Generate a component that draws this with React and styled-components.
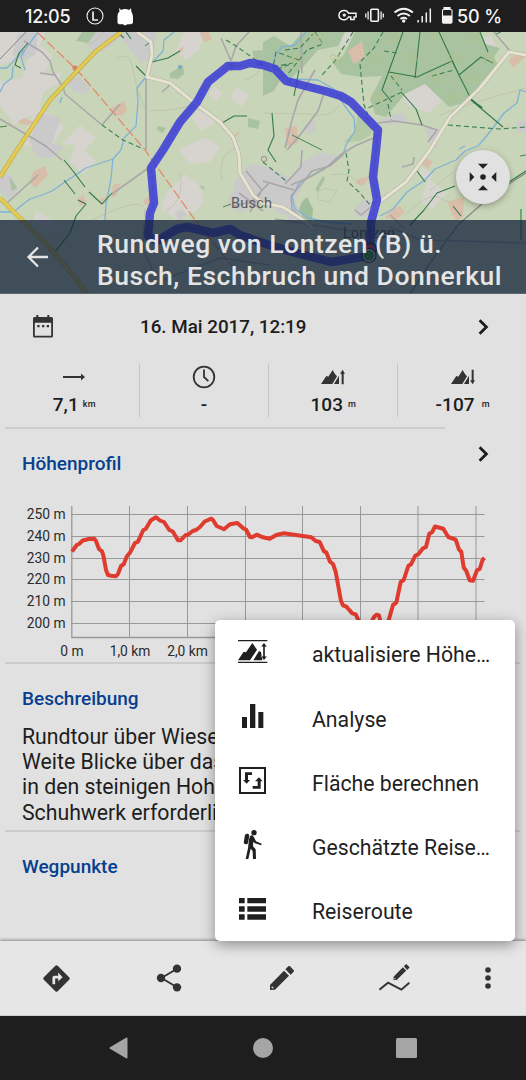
import React from 'react';
import styled, { createGlobalStyle } from 'styled-components';

const GlobalStyle = createGlobalStyle`
    * {
        box-sizing: border-box;
    }
    body {
        margin: 0;
        background: #e1e1e1;
        font-family: Roboto, "Liberation Sans", sans-serif;
        color: #1d1d1d;
    }
    svg {
        display: block;
        flex: none;
    }
`;

const Screen = styled.div`
    position: relative;
    display: flex;
    flex-direction: column;
    width: 526px;
    height: 1080px;
    overflow: hidden;
    background: #e1e1e1;
`;

const StatusBar = styled.div`
    display: flex;
    align-items: center;
    height: 32px;
    padding: 0 25px;
    background: #1e1e1e;
    color: #f5f5f5;
`;
const StatusText = styled.span`
    font-family: Inter, Roboto, sans-serif;
    font-size: 18px;
    font-weight: 500;
    line-height: 32px;
    white-space: nowrap;
    width: ${props => props.$width}px;
    letter-spacing: ${props => props.$spacing}px;
    padding-top: 2px;
`;
const StatusIcons = styled.div`
    display: flex;
    align-items: center;
    margin-left: ${props => props.$left};
`;

const MapArea = styled.div`
    position: relative;
    height: 262px;
    flex: none;
`;
const TitleBar = styled.div`
    position: absolute;
    left: 0;
    right: 0;
    bottom: 0;
    height: 74.5px;
    display: flex;
    align-items: center;
    padding: 1px 0 0 26px;
    background: rgba(17, 32, 57, 0.75);
    border-bottom: 1px solid #5d666e;
`;
const Title = styled.h1`
    margin: 0 0 0 48px;
    padding-top: 7px;
    font-size: 26.5px;
    font-weight: 500;
    line-height: 32px;
    letter-spacing: 0.53px;
    white-space: pre;
    color: #e4e4e4;
`;
const RoundButton = styled.div`
    position: absolute;
    left: 456px;
    top: 118px;
    width: 54px;
    height: 54px;
    border-radius: 50%;
    background: #e1e1e1;
    box-shadow: 0 2px 6px rgba(0, 0, 0, 0.3);
    display: flex;
    align-items: center;
    justify-content: center;
`;

const Content = styled.div`
    flex: 1;
    min-height: 0;
    display: flex;
    flex-direction: column;
`;
const DateRow = styled.div`
    display: flex;
    align-items: center;
    height: 64px;
    padding: 1px 36px 0 33px;
`;
const DateText = styled.div`
    flex: 1;
    margin-left: 87px;
    font-size: 18.8px;
    font-weight: 500;
`;
const Stats = styled.div`
    display: flex;
    height: 69px;
    padding: 6px 0 10px 9.5px;
`;
const Stat = styled.div`
    width: 129.3px;
    flex: none;
    display: flex;
    flex-direction: column;
    align-items: center;
    border-left: ${props => props.$first ? 'none' : '1.5px solid #c4c4c4'};
`;
const StatIcon = styled.div`
    flex: none;
    height: 26px;
    display: flex;
    align-items: center;
`;
const StatValue = styled.div`
    display: flex;
    align-items: center;
    line-height: 29px;
    font-size: 19px;
    font-weight: 500;
    letter-spacing: 0.1px;
`;
const Unit = styled.span`
    font-size: 9px;
    margin-left: ${props => props.$gap}px;
`;
const Divider = styled.div`
    flex: none;
    height: 2px;
    margin: 0 ${props => props.$right}px 0 5px;
    background: #cccccc;
`;
const SectionHeader = styled.div`
    display: flex;
    justify-content: space-between;
    height: ${props => props.$height}px;
    padding: 23px 36px 0 22px;
`;
const SectionTitle = styled.h2`
    margin: 0;
    font-size: 19px;
    font-weight: 500;
    line-height: 24px;
    color: #063f8f;
`;
const Description = styled.p`
    margin: 0;
    height: 106px;
    padding-left: 22px;
    font-size: 21.25px;
    line-height: 25.2px;
    white-space: pre;
`;
const ChevronSlot = styled.div`
    margin-top: -7px;
`;

const Toolbar = styled.div`
    flex: none;
    display: flex;
    align-items: center;
    height: 75px;
    background: #e6e6e6;
    border-bottom: 1px solid #c9cdcc;
    box-shadow: 0 -1px 3px rgba(0, 0, 0, 0.4);
`;
const ToolButton = styled.div`
    display: flex;
    justify-content: center;
    width: ${props => props.$narrow ? '75.2px' : '112.7px'};
`;
const NavBar = styled.div`
    flex: none;
    display: flex;
    align-items: center;
    justify-content: space-between;
    height: 64px;
    padding: 0 109px;
    background: #1e1e1e;
`;

const Menu = styled.div`
    position: absolute;
    left: 215px;
    top: 620px;
    width: 300px;
    height: 321px;
    border-radius: 5px;
    background: #ffffff;
    box-shadow: 0 4px 14px rgba(0, 0, 0, 0.38);
    padding-top: 2px;
`;
const MenuItem = styled.div`
    display: flex;
    align-items: center;
    height: 64.2px;
    padding-left: 22px;
`;
const MenuIcon = styled.div`
    width: 75px;
    padding-bottom: 4px;
`;
const MenuLabel = styled.div`
    font-size: 21.25px;
    line-height: 30px;
    padding-top: 2.6px;
    white-space: nowrap;
    color: #1f1f1f;
`;

const ROUTE = 'M369 256L331 262L296 253L263 243L240 235L230 229L213 233L187 227L177 229L157 241L148 236L150 213L154 203L151 168L163 150L180 122L197 102L208 82L228 66L240 66L250 63L263 65L275 69L286 81L325 91L341 96L351 102L378 130L376 150L373 177L377 200L371 222L370 250';

const TREES = [[318, 38], [393, 38], [435, 38], [474, 38], [336, 59], [374, 59], [412, 59], [454, 59], [489, 59], [395, 79], [435, 79], [474, 79], [378, 98], [454, 98], [295, 59]];

const MapView = () => (
    <svg width="526" height="262" viewBox="0 32 526 262">
        <rect y="32" width="526" height="262" fill="#c9d5b8"/>
        {/* fields */}
        <g fill="#d7d4d0">
            <path d="M0 32H46L40 45L53 56L43 75L62 72L58 84L43 92L39 110L14 125L0 104V82L22 78L30 56L0 65Z"/>
            <path d="M36 106L51 115L64 127L53 144L37 148L24 145L27 126Z"/>
            <path d="M80 125L96 138L84 150L96 161L83 174L70 162L75 144L62 145Z"/>
            <path d="M184 32H204L199 50L186 60L176 51Z"/>
            <path d="M214 86L223 93L216 101L208 95ZM237 87L249 96L241 107L230 97ZM198 110L217 121L201 131L192 118Z"/>
            <path d="M206 138L220 147L210 162L190 164L178 149Z"/>
            <path d="M185 174L200 186L204 200L198 209L178 220L161 209L165 195Z"/>
            <path d="M401 94L430 80L442 101L429 113L407 105Z"/>
            <path d="M469 48L490 35L497 46L481 56ZM428 178L447 193L432 209L421 202ZM343 34L352 32L349 44L340 48Z"/>
            <path d="M36 211L53 221L49 230L34 219ZM422 167L433 174L429 180L419 175Z"/>
        </g>
        <g fill="#cacaca">
            <path d="M95 32H157L153 58L140 63L129 48L121 37L103 52L87 48Z"/>
            <path d="M18 34L38 32L36 54L24 61L12 55Z"/>
            <path d="M67 83L78 76L91 88L84 94L72 91ZM43 113L61 118L52 143L64 147L53 158L36 157L29 140Z"/>
            <path d="M235 181L250 164L269 167L291 179L294 216L278 214L265 199L240 213L227 206Z"/>
            <path d="M300 164L321 152L337 157L330 166L312 170L294 201L309 224H288L286 185Z"/>
            <path d="M354 210L364 198L372 202L370 218L358 217ZM380 120L402 112L408 121L388 125ZM174 213L182 209L187 215L179 220Z"/>
            <path d="M0 176L12 174L18 190L9 199L0 192ZM304 127L314 120L317 129L307 135ZM425 128L440 129L437 150L430 142ZM517 121H526V133L517 132Z"/>
        </g>
        {/* woods */}
        <g fill="#a9c3a1">
            <path d="M303 32H345L338 46L318 50L304 66L289 80L275 70L263 59V42L274 36L290 46Z"/>
            <path d="M355 32H480L485 44L500 48L494 57L498 66L480 84L471 101L449 107L441 99L425 84L405 94L386 117L375 114L370 99L382 76L361 77L341 74L333 63L343 56Z"/>
            <path d="M263 65L282 77L274 91L263 96ZM252 51L264 50L270 65L257 66ZM223 62L237 63L231 72Z"/>
            <path d="M302 202L307 197L313 209L312 222L303 218L299 209Z" fill="#9fbd99"/>
            <path d="M170 73L183 65L184 74L178 79L170 78Z"/>
            <path d="M76 41L82 32L96 32L88 43ZM158 126L166 128L163 133L157 130ZM248 118L260 121L258 129L248 127Z"/>
            <path d="M9 176L17 188L12 191ZM199 185L205 187L203 190Z"/>
            <path d="M315 189L323 176L325 179L318 192Z"/>
            <path d="M358 112L370 120L372 134L360 141L344 142L354 132Z" fill="#b4caa7"/>
        </g>
        <g fill="#d8bea8">
            <path d="M199 32H209L212 40L204 42ZM348 51L362 41L365 58L354 64ZM508 60L515 55L525 57L513 68Z"/>
            <path d="M112 108L124 101L127 110L122 116L113 114ZM18 121L24 118L34 122L28 125L20 124Z"/>
            <path d="M33 172L45 166L48 175L35 188L30 182ZM113 185L121 183L116 196L111 198ZM99 199L109 196L103 205ZM77 199L83 195L86 202L80 206Z"/>
            <path d="M143 201L151 194L151 205L145 205ZM285 128L297 126L298 143L287 146ZM424 156L433 162L428 169L420 163Z"/>
            <path d="M357 179L369 177L363 186L356 183ZM390 210L400 206L405 212L396 220L385 218ZM448 202L464 197L463 217L456 221L450 210Z"/>
            <path d="M232 137L240 130L238 135L232 139ZM177 51L184 46L182 52Z"/>
        </g>
        {/* contours */}
        <g fill="none" stroke="#b8bea8" strokeWidth="0.7">
            <path d="M82 40Q91 48 98 38T110 42M116 59Q130 50 133 70T145 109M180 172Q185 200 166 211M150 110Q170 113 198 103M222 180Q217 155 237 147"/>
            <path d="M263 113L310 114Q330 119 340 105M330 175Q350 170 360 185M440 115Q480 100 526 88M318 192Q324 186 337 191L330 202L318 200Z"/>
            <path d="M405 215Q430 190 442 199T470 185M35 245Q70 230 110 212T144 218M245 80Q265 74 262 52M478 150Q460 168 430 190"/>
        </g>
        <g fill="none" stroke="#7fb3d6" strokeWidth="1.3" strokeLinejoin="round">
            <path d="M38 32L26 48L21 57L25 70M24 50L7 68L0 68M13 66L12 78L4 84L0 92"/>
            <path d="M174 32L164 40L163 51L154 61M145 78L137 88L138 102L136 126L124 138L121 150L113 159L86 168L62 184L52 191L42 195L30 199L22 205L14 212L0 212M113 158L111 179L106 204L105 220"/>
            <path d="M306 32L295 45L282 47L276 54L273 68L292 79L318 80L334 89L344 105L354 118L355 131L346 145L343 155L328 166L299 183L292 197L295 209L309 218L326 222L352 224"/>
            <path d="M526 92L520 90L517 103L504 113L493 128L484 139L478 146L465 151L456 160L435 169L425 180L407 192L393 209L380 216"/>
            <path d="M60 103L62 97M465 146L459 149"/>
        </g>
        {/* minor roads */}
        <g fill="none" stroke="#aaa6aa" strokeWidth="1.6" strokeLinejoin="round">
            <path d="M24 41L42 52L50 61L53 72L63 87L65 94L102 125M40 73L54 75M102 125L120 104M0 119L34 139L47 147L62 160"/>
            <path d="M146 78L146 150M170 85L162 92M7 203L38 175M147 169L112 194M249 32L236 46L231 61M221 38L231 61"/>
            <path d="M324 93L318 111L300 135L287 150M315 70L298 100L292 120L285 148M378 123L394 121L422 125L437 130L428 142M378 136L355 146L340 155L326 168L310 177L291 185"/>
            <path d="M301 32L302 73M494 32L510 51M294 190L263 181M302 150L301 167L285 184M343 155L330 166L312 171L304 181L291 196L292 209L306 222L315 231"/>
            <path d="M246 171L262 190L250 212M234 206L251 202L269 183M239 193L263 211M355 210L361 215L371 207M402 167L413 164L414 157M390 215L404 228"/>
            <path d="M526 173L501 189L484 202L458 225L430 263L410 294" stroke="#888888" strokeWidth="1.2"/>
            <path d="M26 32L0 59" stroke="#858585" strokeWidth="1"/>
            <path d="M144 225L143 250L155 275M275 219L352 231M160 281L220 258L270 265M390 227L420 240L526 243"/>
        </g>
        {/* footpaths */}
        <g fill="none" stroke="#3a8050" strokeWidth="1.1" strokeDasharray="5 3">
            <path d="M102 125L123 140L141 148M299 60L276 52L273 67L293 63L278 69M285 50L300 48L313 34M315 32L323 44L307 50L287 75M353 32L335 61L320 77M360 64L364 105L368 115M383 32L374 48L361 61M384 51L397 53M432 76L454 70"/>
            <path d="M391 76L402 90M402 92L368 108M388 104L391 120M226 40L236 46L263 65M448 125L499 129L526 127M346 153L349 170L347 181L359 192L371 206M263 162L286 181M472 100L484 109"/>
        </g>
        <g fill="none" stroke="#347a49" strokeWidth="1.1" strokeLinejoin="round">
            <path d="M403 32L382 90L392 102M420 32L415 78M389 72L417 77L452 61L471 99L482 108M439 32L459 75L481 57L493 63M471 100L503 127M299 70L294 96M272 113L274 136L268 150L276 162"/>
            <path d="M28 43L19 53L15 65L21 68M152 62L168 58L180 51M136 66L146 76M222 123L234 116L247 116M64 160L73 171L85 187M64 180L75 194M89 192L102 204L112 193M78 200L86 204L76 216L70 233L54 253"/>
            <path d="M402 93L416 109L422 125M117 32L124 38M126 32L131 39M417 171L425 182M455 186L437 193L424 210L410 225M526 171L509 182L493 186M521 209L521 240M480 32L488 52M453 206L461 216"/>
            <path d="M292 135L308 143L322 150M0 127L7 126M145 46L149 43M223 207L231 204M520 156L526 155M496 34L501 32" strokeWidth="0.9"/>
        </g>
        <path d="M38 33L78 71L145 150L195 220L235 270" fill="none" stroke="#e38666" strokeWidth="1.2" strokeDasharray="10 3"/>
        <circle cx="75" cy="68" r="2.5" fill="#e27b64"/>
        <circle cx="180" cy="67" r="2" fill="#70a9ce"/>
        <g fill="none" strokeLinejoin="round">
            <path d="M121 32L95 52L78 70L50 100L17 150L0 177M0 198L27 225L50 248L73 275L87 294" stroke="#b8aa52" strokeWidth="4.5"/>
            <path d="M121 32L95 52L78 70L50 100L17 150L0 177M0 198L27 225L50 248L73 275L87 294" stroke="#e3cb52" strokeWidth="3.2"/>
            <path d="M137 32L151 42L152 55L147 77L170 83L197 105L220 122L233 137L239 154L240 173L253 195L263 203L283 207L306 222L315 230M526 55L509 52L480 88L450 117L430 150L406 182L378 203L370 211" stroke="#b5b5a4" strokeWidth="4.3"/>
            <path d="M137 32L151 42L152 55L147 77L170 83L197 105L220 122L233 137L239 154L240 173L253 195L263 203L283 207L306 222L315 230M526 55L509 52L480 88L450 117L430 150L406 182L378 203L370 211" stroke="#e7e3d2" strokeWidth="3"/>
        </g>
        <circle cx="264" cy="159" r="2.6" fill="#c9d5b8" stroke="#909090"/>
        {TREES.map(([x, y]) => (
            <g key={x + '-' + y} fill="none" stroke="#b4bf82" strokeWidth="0.9" opacity="0.75">
                <circle cx={x - 3} cy={y - 2} r="2.5"/>
                <path d={`M${x - 3} ${y}V${y + 5}M${x + 3} ${y - 5}L${x} ${y + 2}H${x + 6}ZM${x + 3} ${y + 2}V${y + 5}`}/>
            </g>
        ))}
        <g fontFamily="Roboto, sans-serif" fontSize="14.5" fill="#5b5b5b">
            <text x="231" y="208" textLength="41">Busch</text>
            <text x="343" y="238" textLength="52">Lontzen</text>
        </g>
        <path d={ROUTE} fill="none" stroke="#3a39d8" strokeOpacity="0.85" strokeWidth="8.5" strokeLinejoin="round"/>
        <path d={ROUTE} fill="none" stroke="#3f45a8" strokeOpacity="0.5" strokeWidth="1" strokeDasharray="6 3"/>
        <circle cx="370.5" cy="249" r="6" fill="#c73c58" stroke="#222" strokeWidth="1.5"/>
        <circle cx="369" cy="255.5" r="6" fill="#3c9b3c" stroke="#ffffff" strokeWidth="1.3"/>
        <circle cx="369" cy="255.5" r="7" fill="none" stroke="#222" strokeWidth="1.2"/>
    </svg>
);

const Chevron = () => (
    <svg width="12" height="18" viewBox="0 0 12 18">
        <path d="M1.6 2.2L8.4 9L1.6 15.8" fill="none" stroke="#1c1c1c" strokeWidth="2.8"/>
    </svg>
);

// mountain silhouette shared by the elevation icons, with a cut for the second slope
const Mountains = () => (
    <path d="M0 45L16 21L22 23L35 3L42 15L48 22L34 45ZM39 45L54 20V45Z"/>
);

const PROFILE = [
    [72, 551.7], [76.7, 545], [79, 544], [82.7, 540.5], [89, 539], [94.3, 538.7], [96, 541], [99, 549], [102, 551.3], [103.5, 556], [106, 570], [108, 575], [111, 575.7], [116, 576.3], [118, 574], [121, 566], [123.7, 564.3], [127, 556], [130, 552.7], [135, 543], [138, 541.7], [143.3, 530], [145.7, 529], [150.7, 520.5], [156, 517.3], [160, 520.5], [164, 522], [169.3, 530], [172.7, 531.5], [178, 540.3], [180.5, 540.3], [185.3, 535.3], [188, 534.7], [192.7, 531], [196, 530], [200, 527], [204.7, 521.5], [211.3, 518.7], [213, 520], [216.7, 526], [224, 529.3], [230, 524.3], [237.3, 523], [243.3, 528.3], [246, 529.5], [250, 537], [252, 537.3], [256.7, 534.7], [263, 537.3], [269.7, 538.7], [276.3, 535], [283.7, 533.3], [311.3, 537.3], [315.7, 541], [319.7, 542], [324, 551.3], [326.3, 552.3], [330, 561.7], [333, 564], [335.7, 572], [341, 601], [343, 605.3], [346.3, 606.7], [352.3, 613.3], [355.7, 614.3], [358.3, 620], [364, 628], [369, 627], [374, 617], [376.5, 614.7], [379, 615.5], [381, 624], [386, 628], [389, 619], [393, 605], [396.3, 602.7], [400.7, 582], [403.7, 580], [408.3, 566], [411, 564.3], [415.3, 555.7], [418.5, 554], [423, 548.3], [426, 547], [429.3, 533.8], [432, 532.3], [435, 526.5], [443.3, 528.7], [448.3, 537], [455.7, 539.7], [459, 549.5], [461.3, 551.7], [463.7, 567.5], [466.3, 571], [469.7, 580.3], [473, 580.7], [477, 570.3], [479.7, 569], [482.5, 560], [484.5, 557.8],
];
const GRID_X = [129.5, 187.5, 245.5, 302.5, 360.5, 418, 476];
const LEVELS = [['250 m', 514.5], ['240 m', 536.5], ['230 m', 558.5], ['220 m', 579.5], ['210 m', 601.5], ['200 m', 623.5]];

const ElevationChart = () => (
    <svg width="526" height="165" viewBox="0 497 526 165" fontFamily="Roboto, sans-serif" fontSize="13.8" fill="#2b2b2b">
        <g stroke="#999999" strokeWidth="1">
            {LEVELS.map(([label, y]) => <line key={label} x1="71" x2="484.5" y1={y} y2={y}/>)}
            {GRID_X.map(x => <line key={x} x1={x} x2={x} y1="506" y2="637"/>)}
            <path d="M71.8 506V637.5H484.5" fill="none" strokeWidth="1.3"/>
        </g>
        {LEVELS.map(([label, y]) => <text key={label} x="65.5" y={y + 4.5} textAnchor="end">{label}</text>)}
        <text x="72" y="655.5" textAnchor="middle">0 m</text>
        <text x="130" y="655.5" textAnchor="middle">1,0 km</text>
        <text x="187.5" y="655.5" textAnchor="middle">2,0 km</text>
        <polyline points={PROFILE.map(p => p.join(',')).join(' ')} fill="none" stroke="#df3b2f" strokeWidth="4" strokeLinejoin="round"/>
    </svg>
);

const Pencil = ({ size }) => (
    <svg width={size} height={size} viewBox="0 0 72 72" fill="#333333">
        <path fillRule="evenodd" d="M0 57L42 14L57 29L15 71L0 72ZM5 61V67H11L9 63Z"/>
        <path d="M46 10L55 1Q57 -1 60 1L70 11Q73 14 71 17L62 26Z"/>
    </svg>
);

const App = () => {
    return (
        <Screen>
            <GlobalStyle/>
            <StatusBar>
                <StatusText $width={61} $spacing={-0.3}>12:05</StatusText>
                <svg width="18" height="18" viewBox="0 0 18 18" fill="none" stroke="#f0f0f0">
                    <circle cx="9" cy="9" r="8" strokeWidth="1.1"/>
                    <path d="M7 4.5V13H12" strokeWidth="1.7"/>
                </svg>
                <StatusIcons $left="13px">
                    <svg width="17" height="19" viewBox="0 0 17 19" fill="#ffffff">
                        <path d="M2 1L4 3Q8 1 12 3L14 1.2L14.5 5Q16 7 16 10V16L14 17.3H10.5L8 18.5L6 17.3H2L0.5 16V9Q0.5 6 2.5 4.6Z"/>
                    </svg>
                </StatusIcons>
                <StatusIcons $left="auto">
                    <svg width="120" height="22" viewBox="-1.5 0 120 22" fill="none" stroke="#f2f2f2">
                        {/* vpn key */}
                        <path d="M10 8.3H17.5V12H15.6V14.6H12.2V12H10A5 4.7 0 1 1 10 8.3Z" strokeWidth="1.5"/>
                        <circle cx="5.8" cy="10.1" r="1.6" fill="#f2f2f2" stroke="none"/>
                        {/* vibration */}
                        <rect x="32.3" y="4.3" width="7.6" height="12" rx="1" strokeWidth="1.6"/>
                        <path d="M29.6 6.5V14.5M27.3 8.5V12.5M42.6 6.5V14.5M44.8 8.5V12.5" strokeWidth="1.3"/>
                        {/* wifi */}
                        <path d="M56 7.5Q65.2 0 74.4 7.5M59 11Q65.2 6 71.4 11M62 14Q65.2 11.5 68.4 14" strokeWidth="1.8"/>
                        <circle cx="65.2" cy="16" r="1.7" fill="#f2f2f2" stroke="none"/>
                        {/* signal */}
                        <path d="M79.6 15V17.5M83.7 11V17.5M87.8 7.5V17.5M91.8 3.5V17.5" strokeWidth="1.5"/>
                        {/* battery */}
                        <path d="M105.5 2.5H111.5V4.5H112.5Q113.5 4.5 113.5 5.5V17Q113.5 18.2 112.3 18.2H105Q104 18.2 104 17V5.5Q104 4.5 105 4.5H105.5Z" strokeWidth="1.1"/>
                        <rect x="104" y="10.5" width="9.5" height="7.5" fill="#f2f2f2" stroke="none"/>
                        <path d="M105.5 2.5H111.5V5H105.5Z" fill="#f2f2f2" stroke="none"/>
                    </svg>
                </StatusIcons>
                <StatusText $width={44} $spacing={-0.1}>50 %</StatusText>
            </StatusBar>

            <MapArea>
                <MapView/>
                <RoundButton>
                    <svg width="28" height="28" viewBox="0 0 28 28" fill="#222222">
                        <path d="M9 0.7H19L14 5.7ZM9 27.3H19L14 22.3ZM0.7 9V19L5.3 14ZM27.3 9V19L22.3 14Z"/>
                        <circle cx="14" cy="14" r="2.8"/>
                    </svg>
                </RoundButton>
                <TitleBar>
                    <svg width="23" height="22" viewBox="0 0 23 22">
                        <path d="M12 1.5L2.5 11L12 20.5M2.5 11H22" fill="none" stroke="#e4e4e4" strokeWidth="2.3"/>
                    </svg>
                    <Title>{'Rundweg von Lontzen (B) ü.\nBusch, Eschbruch und Donnerkul'}</Title>
                </TitleBar>
            </MapArea>

            <Content>
                <DateRow>
                    <svg width="20" height="23" viewBox="0 0 20 23">
                        <path fill="#333333" fillRule="evenodd" d="M3.3 0H5.3V2H14.3V0H16.3V2H18.5Q20 2 20 3.5V21Q20 22.5 18.5 22.5H1.5Q0 22.5 0 21V3.5Q0 2 1.5 2H3.3ZM1.8 7.8V20.8H18.2V7.8ZM4.3 10H6.6V12.3H4.3ZM9 10H11.3V12.3H9ZM13.7 10H16V12.3H13.7Z"/>
                    </svg>
                    <DateText>16. Mai 2017, 12:19</DateText>
                    <Chevron/>
                </DateRow>
                <Stats>
                    <Stat $first>
                        <StatIcon>
                            <svg width="22" height="8" viewBox="0 0 22 8" fill="#333333">
                                <path d="M0 3H18V0.5L22 4L18 7.5V5H0Z"/>
                            </svg>
                        </StatIcon>
                        <StatValue>7,1<Unit $gap={4}>km</Unit></StatValue>
                    </Stat>
                    <Stat>
                        <StatIcon>
                            <svg width="24" height="24" viewBox="0 0 24 24" fill="none" stroke="#333333">
                                <circle cx="12" cy="12" r="10.3" strokeWidth="1.8"/>
                                <path d="M12 4.5V12L16.4 16.2" strokeWidth="1.8"/>
                            </svg>
                        </StatIcon>
                        <StatValue>-</StatValue>
                    </Stat>
                    <Stat>
                        <StatIcon>
                            <svg width="24" height="16" viewBox="0 0 72 48" fill="#333333">
                                <Mountains/>
                                <path d="M62 46V14H57L65 2L72 14H68V46Z"/>
                            </svg>
                        </StatIcon>
                        <StatValue>103<Unit $gap={5}>m</Unit></StatValue>
                    </Stat>
                    <Stat>
                        <StatIcon>
                            <svg width="24" height="16" viewBox="0 0 72 48" fill="#333333">
                                <Mountains/>
                                <path d="M62 2V34H57L65 46L72 34H68V2Z"/>
                            </svg>
                        </StatIcon>
                        <StatValue>-107<Unit $gap={7}>m</Unit></StatValue>
                    </Stat>
                </Stats>
                <Divider $right={81}/>
                <SectionHeader $height={68}>
                    <SectionTitle>Höhenprofil</SectionTitle>
                    <ChevronSlot><Chevron/></ChevronSlot>
                </SectionHeader>
                <ElevationChart/>
                <Divider $right={6}/>
                <SectionHeader $height={60}>
                    <SectionTitle>Beschreibung</SectionTitle>
                </SectionHeader>
                <Description>
                    {'Rundtour über Wiesen\nWeite Blicke über das\nin den steinigen Hohl\nSchuhwerk erforderlich'}
                </Description>
                <Divider $right={6}/>
                <SectionHeader $height={60}>
                    <SectionTitle>Wegpunkte</SectionTitle>
                </SectionHeader>
            </Content>

            <Toolbar>
                <ToolButton>
                    <svg width="27" height="27" viewBox="0 0 80 80">
                        <path d="M36.5 2.5Q40 -1 43.5 2.5L77.5 36.5Q81 40 77.5 43.5L43.5 77.5Q40 81 36.5 77.5L2.5 43.5Q-1 40 2.5 36.5Z" fill="#333333"/>
                        <path d="M28 57V38Q28 32 34 32H45V22L58 36L45 49V40H36V57Z" fill="#e6e6e6"/>
                    </svg>
                </ToolButton>
                <ToolButton>
                    <svg width="26" height="28" viewBox="0 0 78 84" fill="#333333">
                        <path d="M16 42L62 15M16 42L62 69" stroke="#333333" strokeWidth="6"/>
                        <circle cx="15" cy="42" r="12.5"/>
                        <circle cx="63" cy="14" r="12.5"/>
                        <circle cx="63" cy="70" r="12.5"/>
                    </svg>
                </ToolButton>
                <ToolButton>
                    <Pencil size={24}/>
                </ToolButton>
                <ToolButton>
                    <svg width="31" height="28" viewBox="0 0 93 84">
                        <svg x="43" y="0" width="49" height="49" viewBox="0 0 72 72" fill="#333333">
                            <path fillRule="evenodd" d="M0 57L42 14L57 29L15 71L0 72ZM5 61V67H11L9 63Z"/>
                            <path d="M46 10L57 0L72 14L62 26Z"/>
                        </svg>
                        <path d="M1 77L27 56L67 77L91 56" fill="none" stroke="#333333" strokeWidth="6"/>
                    </svg>
                </ToolButton>
                <ToolButton $narrow>
                    <svg width="14" height="24" viewBox="0 0 14 24" fill="#333333">
                        <circle cx="7" cy="4" r="2.8"/>
                        <circle cx="7" cy="12" r="2.8"/>
                        <circle cx="7" cy="20" r="2.8"/>
                    </svg>
                </ToolButton>
            </Toolbar>

            <NavBar>
                <svg width="21" height="22" viewBox="0 0 21 22">
                    <path d="M1.5 11L17.5 1.5V20.5Z" fill="#a5a5a5" stroke="#a5a5a5" strokeWidth="2" strokeLinejoin="round"/>
                </svg>
                <svg width="20" height="20" viewBox="0 0 20 20">
                    <circle cx="10" cy="10" r="10" fill="#a5a5a5"/>
                </svg>
                <svg width="21" height="20" viewBox="0 0 21 20">
                    <rect width="21" height="20" rx="1.5" fill="#a5a5a5"/>
                </svg>
            </NavBar>

            <Menu>
                <MenuItem>
                    <MenuIcon>
                        <svg width="32" height="24" viewBox="0 0 96 72" fill="#1f1f1f">
                            <path d="M3 0H91V4H3ZM3 65H91V69H3Z"/>
                            <path d="M3 61L20 35L27 37L46 9L60 29L39 61ZM49 61L66 33L72 36L76 61Z"/>
                            <path d="M81 8L90 20H84V49H90L81 61L72 49H78V20H72Z" stroke="#ffffff" strokeWidth="1"/>
                        </svg>
                    </MenuIcon>
                    <MenuLabel>aktualisiere Höhe…</MenuLabel>
                </MenuItem>
                <MenuItem>
                    <MenuIcon>
                        <svg width="32" height="24" viewBox="0 0 96 72" fill="#1f1f1f">
                            <path d="M15 39H30V72H15ZM39 0H55V72H39ZM64 24H79V72H64Z"/>
                        </svg>
                    </MenuIcon>
                    <MenuLabel>Analyse</MenuLabel>
                </MenuItem>
                <MenuItem>
                    <MenuIcon>
                        <svg width="32" height="27" viewBox="0 0 96 81" fill="#1f1f1f">
                            <path fillRule="evenodd" d="M6 0H87V81H6ZM12 6V75H81V6Z"/>
                            <path d="M24 16H45V24H33V39H39L29 50L18 39H24ZM47 65V57H62V43H54L66 31L77 43H71V65Z"/>
                        </svg>
                    </MenuIcon>
                    <MenuLabel>Fläche berechnen</MenuLabel>
                </MenuItem>
                <MenuItem>
                    <MenuIcon>
                        <svg width="32" height="29" viewBox="0 0 96 87" fill="#1f1f1f">
                            <circle cx="51" cy="8" r="8"/>
                            <rect x="22" y="11" width="13" height="32" rx="6" transform="rotate(10 28 27)"/>
                            <path d="M40 17Q46 14 50 20L57 34L74 41L73 46L54 40L49 35L48 49L56 58L57 87H48L47 63L41 56L34 87H26L33 55L36 28Z"/>
                        </svg>
                    </MenuIcon>
                    <MenuLabel>Geschätzte Reise…</MenuLabel>
                </MenuItem>
                <MenuItem>
                    <MenuIcon>
                        <svg width="32" height="22" viewBox="0 0 96 66" fill="#1f1f1f">
                            <path d="M6 0H23V16H6ZM31 0H87V16H31ZM6 25H23V41H6ZM31 25H87V41H31ZM6 49H23V65H6ZM31 49H87V65H31Z"/>
                        </svg>
                    </MenuIcon>
                    <MenuLabel>Reiseroute</MenuLabel>
                </MenuItem>
            </Menu>
        </Screen>
    );
};

export default App;
